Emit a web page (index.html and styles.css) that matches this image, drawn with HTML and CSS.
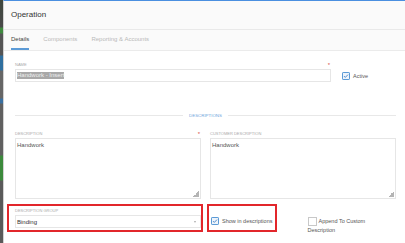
FILE: index.html
```html
<!DOCTYPE html>
<html lang="en">
<head>
<meta charset="utf-8">
<title>Operation</title>
<link rel="stylesheet" href="styles.css">
</head>
<body>
<div class="app">
  <div class="backdrop"></div>
  <div class="modal">
    <header class="modal-header">Operation</header>
    <nav class="tabs">
      <a class="tab active">Details</a>
      <a class="tab">Components</a>
      <a class="tab">Reporting &amp; Accounts</a>
    </nav>
    <main class="modal-body">
      <div class="row-name">
        <div class="field">
          <div class="label-row"><span class="label">Name</span><span class="req">*</span></div>
          <div class="input"><span class="selected">Handwork - Insert</span></div>
        </div>
        <label class="check check-active">
          <svg class="cb" width="8" height="8" viewBox="0 0 8 8"><rect x="0.5" y="0.5" width="7" height="7" rx="0.6" fill="#eef4fb" stroke="#5b9ad6"/><path d="M2 4.1 L3.3 5.4 L6 2.6" fill="none" stroke="#3f7fc4" stroke-width="0.9"/></svg>
          <span>Active</span>
        </label>
      </div>

      <div class="divider"><span class="line"></span><span class="divider-text">Descriptions</span><span class="line"></span></div>

      <div class="row-desc">
        <div class="field">
          <div class="label-row"><span class="label">Description</span><span class="req">*</span></div>
          <div class="textarea">Handwork</div>
        </div>
        <div class="field">
          <div class="label-row"><span class="label">Customer Description</span></div>
          <div class="textarea">Handwork</div>
        </div>
      </div>

      <div class="row-bottom">
        <div class="field group annot-group">
          <div class="label-row"><span class="label">Description Group</span></div>
          <div class="select"><span>Binding</span><span class="caret"></span></div>
        </div>
        <div class="check-cell annot-check">
          <label class="check">
            <svg class="cb" width="8" height="8" viewBox="0 0 8 8"><rect x="0.5" y="0.5" width="7" height="7" rx="0.6" fill="#eef4fb" stroke="#5b9ad6"/><path d="M2 4.1 L3.3 5.4 L6 2.6" fill="none" stroke="#3f7fc4" stroke-width="0.9"/></svg>
            <span>Show in descriptions</span>
          </label>
        </div>
        <div class="check-cell">
          <label class="check-inline"><span class="box"></span>Append To Custom Description</label>
        </div>
      </div>
    </main>
  </div>
</div>
</body>
</html>
```
FILE: styles.css
```css
html, body {
  margin: 0;
  padding: 0;
}
body {
  width: 405px;
  height: 243px;
  overflow: hidden;
  background: #fff;
  font-family: "Liberation Sans", Arial, sans-serif;
}
.app {
  display: flex;
  height: 243px;
}
.backdrop {
  width: 3px;
  flex: none;
  background: linear-gradient(to bottom,
    #3e473e 0, #4a4a4a 27px, #3f8a3f 28px, #3f8a3f 33px,
    #555 34px, #555 55px, #2f6f9f 56px, #2f6f9f 70px,
    #666 71px, #666 98px, #3a70a0 99px, #3a70a0 103px,
    #606060 104px, #606060 155px, #3c8a3c 156px, #3c8a3c 180px,
    #5a5a5a 181px, #5a5a5a 243px);
}
.modal {
  flex: 1;
  display: flex;
  flex-direction: column;
  border-left: 1px solid #d2d2d2;
  border-top: 1px solid #4a8fe0;
  background: #fff;
}
.modal-header {
  height: 28px;
  line-height: 28px;
  padding-left: 7px;
  font-size: 8px;
  color: #333;
  background: #fafafa;
  border-bottom: 1px solid #e9e9e9;
}
.tabs {
  display: flex;
  gap: 14px;
  height: 20px;
  padding-left: 7px;
  background: #fafafa;
  border-bottom: 1px solid #ebebeb;
}
.tab {
  font-size: 6px;
  line-height: 18px;
  color: #b9b9b9;
  border-bottom: 2px solid transparent;
}
.tab.active {
  color: #444;
  border-bottom-color: #5b9ad6;
}
.modal-body {
  padding: 11px 9px 0 11px;
}
.label-row {
  display: flex;
  justify-content: space-between;
  height: 6px;
  line-height: 6px;
  margin-bottom: 1px;
}
.label {
  font-size: 4px;
  text-transform: uppercase;
  color: #a9a9a9;
}
.req {
  color: #d9534f;
  font-size: 6px;
  margin-right: 1px;
}
.row-name {
  display: grid;
  grid-template-columns: 316px 1fr;
  column-gap: 10px;
  align-items: end;
}
.input {
  height: 11px;
  border: 1px solid #e6e6e6;
  padding: 0 1px;
  display: flex;
  align-items: center;
}
.selected {
  background: #a8a8a8;
  color: #eeeeee;
  font-size: 6px;
  line-height: 7px;
}
.check {
  display: flex;
  align-items: center;
  gap: 3px;
  font-size: 5.5px;
  color: #555;
}
.check-active {
  height: 13px;
  margin-left: 1px;
}
.cb {
  flex: none;
}
.divider {
  display: flex;
  align-items: center;
  height: 6px;
  margin-top: 30px;
}
.line {
  flex: 1;
  height: 1px;
  background: #e8e8e8;
}
.divider-text {
  margin: 0 6px 0 6px;
  font-size: 4.4px;
  text-transform: uppercase;
  color: #6fa5dc;
}
.row-desc {
  display: grid;
  grid-template-columns: 1fr 1fr;
  column-gap: 9px;
  margin-top: 13px;
}
.textarea {
  position: relative;
  height: 56px;
  border: 1px solid #e6e6e6;
  padding: 3px 2px 0 1px;
  font-size: 6px;
  line-height: 6px;
  color: #555;
}
.textarea::after {
  content: "";
  position: absolute;
  right: 1px;
  bottom: 1px;
  width: 6px;
  height: 6px;
  background: linear-gradient(135deg, transparent 50%, #b4b4b4 50%);
}
.row-bottom {
  display: grid;
  grid-template-columns: repeat(4, 1fr);
  column-gap: 9px;
  align-items: start;
  margin-top: 9px;
}
.group {
  grid-column: span 2;
}
.select {
  height: 11px;
  border: 1px solid #e6e6e6;
  padding: 0 4px 0 1px;
  display: flex;
  align-items: center;
  justify-content: space-between;
  font-size: 6px;
  color: #333;
}
.caret {
  width: 0;
  height: 0;
  border-left: 1.5px solid transparent;
  border-right: 1.5px solid transparent;
  border-top: 2px solid #aaa;
}
.annot-group,
.annot-check {
  position: relative;
}
.annot-group::after {
  content: "";
  position: absolute;
  top: -4px;
  left: -8px;
  right: -2px;
  bottom: -4px;
  border: 2px solid #e2262b;
  pointer-events: none;
}
.check-cell {
  margin-top: 9px;
}
.annot-check .check {
  margin-left: 1px;
}
.annot-check::after {
  content: "";
  position: absolute;
  top: -13px;
  left: -3px;
  width: 70px;
  height: 28px;
  box-sizing: border-box;
  border: 2px solid #e2262b;
  pointer-events: none;
}
.check-inline {
  display: block;
  padding-right: 12px;
  font-size: 5.5px;
  line-height: 8px;
  color: #555;
}
.box {
  display: inline-block;
  width: 7px;
  height: 7px;
  border: 1px solid #c8c8c8;
  vertical-align: middle;
  margin-right: 2px;
  background: #fff;
}
```
